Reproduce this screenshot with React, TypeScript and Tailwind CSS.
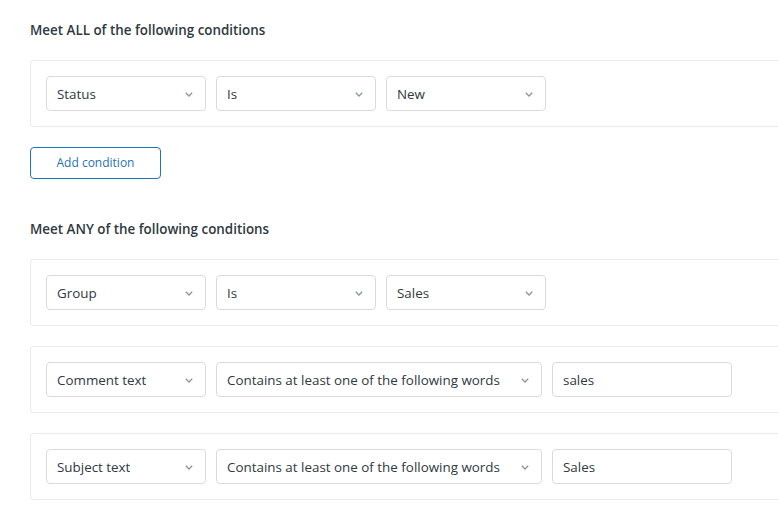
// 조건 행 하나에 들어가는 드롭다운 / 입력칸
type Field =
  | { kind: 'select'; value: string; width: string }
  | { kind: 'input'; value: string; width: string }

const allConditions: Field[][] = [
  [
    { kind: 'select', value: 'Status', width: 'w-[160px]' },
    { kind: 'select', value: 'Is', width: 'w-[160px]' },
    { kind: 'select', value: 'New', width: 'w-[160px]' },
  ],
]

const anyConditions: Field[][] = [
  [
    { kind: 'select', value: 'Group', width: 'w-[160px]' },
    { kind: 'select', value: 'Is', width: 'w-[160px]' },
    { kind: 'select', value: 'Sales', width: 'w-[160px]' },
  ],
  [
    { kind: 'select', value: 'Comment text', width: 'w-[160px]' },
    { kind: 'select', value: 'Contains at least one of the following words', width: 'w-[326px]' },
    { kind: 'input', value: 'sales', width: 'w-[180px]' },
  ],
  [
    { kind: 'select', value: 'Subject text', width: 'w-[160px]' },
    { kind: 'select', value: 'Contains at least one of the following words', width: 'w-[326px]' },
    { kind: 'input', value: 'Sales', width: 'w-[180px]' },
  ],
]

function Chevron() {
  return (
    <svg width="8" height="5" viewBox="0 0 8 5" className="shrink-0 text-[#8c959d] mt-[1px]">
      <polyline points="0.8,0.8 4,4 7.2,0.8" fill="none" stroke="currentColor" strokeWidth="1.3" />
    </svg>
  )
}

function FieldBox({ field }: { field: Field }) {
  return (
    <div
      className={`${field.width} h-[35px] flex items-center justify-between pl-[10px] pr-[12px] pt-[1px] border border-[#d8dcde] rounded-[4px] bg-white text-[13.4px] text-[#2f3941]`}
    >
      <span className="truncate">{field.value}</span>
      {field.kind === 'select' && <Chevron />}
    </div>
  )
}

function ConditionRow({ fields }: { fields: Field[] }) {
  return (
    <div className="w-[780px] border border-r-0 border-[#e9ebed] rounded-l-[4px] p-[15px] flex gap-[10px]">
      {fields.map((f, i) => (
        <FieldBox key={i} field={f} />
      ))}
    </div>
  )
}

export default function App() {
  return (
    <div
      className="min-h-screen bg-white pl-[30px] pt-[20px] overflow-hidden"
      style={{ fontFamily: '"Open Sans", "Noto Sans", sans-serif' }}
    >
      <h2 className="text-[13.4px] leading-[20px] font-semibold text-[#2f3941]">
        Meet ALL of the following conditions
      </h2>
      <div className="mt-[20px] flex flex-col gap-[20px]">
        {allConditions.map((row, i) => (
          <ConditionRow key={i} fields={row} />
        ))}
      </div>
      <button className="block mt-[20px] w-[131px] h-[32px] border border-[#1f73b7] rounded-[4px] text-[12px] text-[#1f73b7] bg-white">
        Add condition
      </button>

      <h2 className="mt-[40px] text-[13.4px] leading-[20px] font-semibold text-[#2f3941]">
        Meet ANY of the following conditions
      </h2>
      <div className="mt-[20px] flex flex-col gap-[20px]">
        {anyConditions.map((row, i) => (
          <ConditionRow key={i} fields={row} />
        ))}
      </div>
    </div>
  )
}
